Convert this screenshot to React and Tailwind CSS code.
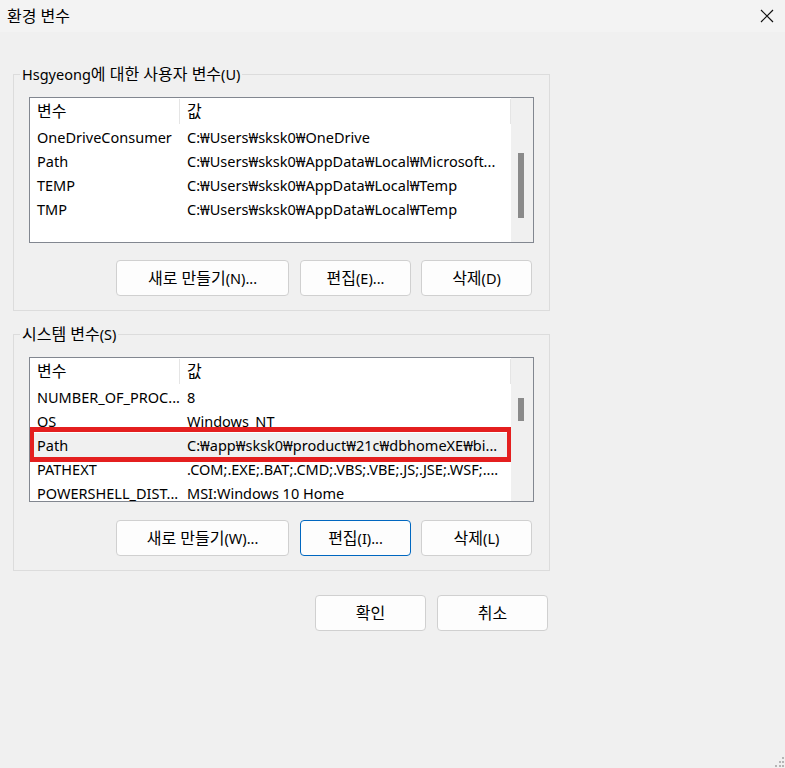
import React from 'react';

const FONT = { fontFamily: '"Noto Sans", "Noto Sans CJK KR", sans-serif' };

// Malgun Gothic draws Hangul a bit larger than the Latin part, so wrap Hangul runs
const ko = (str) =>
  str.split(/([가-힣]+(?: [가-힣]+)*)/).map((part, i) =>
    /[가-힣]/.test(part) ? (
      <span key={i} className="text-[16px]">{part}</span>
    ) : (
      part
    )
  );

const userVars = [
  ['OneDriveConsumer', 'C:₩Users₩sksk0₩OneDrive'],
  ['Path', 'C:₩Users₩sksk0₩AppData₩Local₩Microsoft...'],
  ['TEMP', 'C:₩Users₩sksk0₩AppData₩Local₩Temp'],
  ['TMP', 'C:₩Users₩sksk0₩AppData₩Local₩Temp'],
];

const systemVars = [
  ['NUMBER_OF_PROC...', '8'],
  ['OS', 'Windows_NT'],
  ['Path', 'C:₩app₩sksk0₩product₩21c₩dbhomeXE₩bi...', true],
  ['PATHEXT', '.COM;.EXE;.BAT;.CMD;.VBS;.VBE;.JS;.JSE;.WSF;....'],
  ['POWERSHELL_DIST...', 'MSI:Windows 10 Home'],
];

function Button({ label, wide, focused }) {
  return (
    <button
      className={
        'h-[36px] rounded-[4px] bg-[#fdfdfd] text-[14.5px] text-black border ' +
        (focused ? 'border-[#0067c0]' : 'border-[#d0d0d0]') +
        (wide ? ' w-[173px] mr-[1px]' : ' w-[111px]')
      }
    >
      {ko(label)}
    </button>
  );
}

function VarList({ rows, height, thumbTop, thumbHeight }) {
  return (
    <div className="flex border border-[#828790] bg-white overflow-hidden" style={{ height }}>
      <div className="flex-1 flex flex-col">
        <div className="flex h-[27px] shrink-0 text-[14.5px]">
          <div className="w-[150px] pl-[7px] border-r border-[#e5e5e5] my-[1px] leading-[25px]">{ko('변수')}</div>
          <div className="flex-1 pl-[7px] border-r border-[#e5e5e5] my-[1px] leading-[25px]">{ko('값')}</div>
        </div>
        {rows.map(([name, value, selected]) => (
          <div
            key={name}
            className={'relative flex h-[24px] shrink-0 text-[14.5px] leading-[24px] ' + (selected ? 'bg-[#f0f0f0]' : '')}
          >
            <div className="w-[150px] pl-[7px] whitespace-nowrap">{name}</div>
            <div className="flex-1 pl-[7px] whitespace-nowrap overflow-hidden">{value}</div>
            {selected && (
              <div className="absolute top-[-6px] bottom-[-5px] left-[-1px] right-[-1px] border-[5px] border-[#e41f1f]" />
            )}
          </div>
        ))}
      </div>
      <div className="w-[22px] shrink-0 bg-[#f0f0f0] relative">
        <div
          className="absolute left-[7px] w-[6px] bg-[#8a8a8a]"
          style={{ top: thumbTop, height: thumbHeight }}
        />
      </div>
    </div>
  );
}

function Group({ legend, children }) {
  return (
    <fieldset className="border border-[#dcdcdc] px-[15px] pb-[14px] w-[537px]">
      <legend className="ml-[-9px] px-[2px] text-[14.5px] leading-[20px]">{ko(legend)}</legend>
      {children}
    </fieldset>
  );
}

export default function App() {
  return (
    <div className="relative w-[785px] h-[768px] bg-[#f0f0f0] text-black overflow-hidden" style={FONT}>
      <div className="h-[32px] bg-[#f3f3f3] flex items-center justify-between pl-[7px] pr-[10px]">
        <span className="text-[14.5px]">{ko('환경 변수')}</span>
        <svg width="14" height="14" viewBox="0 0 14 14" className="mr-[1px]">
          <path d="M1 1 L13 13 M13 1 L1 13" stroke="#111" strokeWidth="1.2" />
        </svg>
      </div>

      <div className="pl-[13px] pt-[32px]">
        <Group legend="Hsgyeong에 대한 사용자 변수(U)">
          <div className="mt-[13px]">
            <VarList rows={userVars} height={146} thumbTop={55} thumbHeight={65} />
          </div>
          <div className="mt-[17px] flex justify-end gap-[10px] pr-[2px]">
            <Button label="새로 만들기(N)..." wide />
            <Button label="편집(E)..." />
            <Button label="삭제(D)" />
          </div>
        </Group>

        <div className="mt-[13px]">
          <Group legend="시스템 변수(S)">
            <div className="mt-[13px]">
              <VarList rows={systemVars} height={145} thumbTop={40} thumbHeight={23} />
            </div>
            <div className="mt-[18px] flex justify-end gap-[10px] pr-[2px]">
              <Button label="새로 만들기(W)..." wide />
              <Button label="편집(I)..." focused />
              <Button label="삭제(L)" />
            </div>
          </Group>
        </div>

        <div className="mt-[24px] w-[535px] flex justify-end gap-[11px]">
          <Button label="확인" />
          <Button label="취소" />
        </div>
      </div>

      <svg className="absolute right-0 bottom-0" width="12" height="12" viewBox="0 0 12 12">
        <rect x="9" y="1" width="2" height="2" fill="#b5b5b5" />
        <rect x="6" y="5" width="2" height="2" fill="#b5b5b5" />
        <rect x="9" y="5" width="2" height="2" fill="#b5b5b5" />
        <rect x="2" y="9" width="2" height="2" fill="#b5b5b5" />
        <rect x="6" y="9" width="2" height="2" fill="#b5b5b5" />
        <rect x="9" y="9" width="2" height="2" fill="#b5b5b5" />
      </svg>
    </div>
  );
}
